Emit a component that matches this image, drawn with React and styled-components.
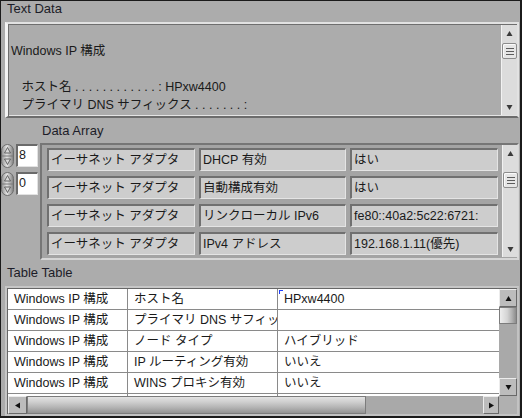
import React from "react";
import styled, { createGlobalStyle } from "styled-components";

const GlobalStyle = createGlobalStyle`
  html, body { margin: 0; padding: 0; background: #acacac; }
  body {
    font-family: "Liberation Sans", "Noto Sans CJK JP", sans-serif;
    font-size: 12.5px;
    color: #1a1a1a;
  }
`;

const Panel = styled.div`
  box-sizing: border-box;
  width: 522px;
  height: 418px;
  background: #acacac;
  border: 1px solid #1b1b1b;
  border-right-width: 2px;
  border-bottom-width: 2px;
  display: flex;
  flex-direction: column;
  overflow: hidden;
`;

const Caption = styled.div`
  box-sizing: border-box;
  height: ${(p) => p.$h}px;
  padding: ${(p) => p.$pt}px 0 0 ${(p) => p.$indent}px;
  font-size: 13px;
  line-height: 16px;
  color: #1c1c28;
`;

/* ---------- text data ---------- */

const TextBox = styled.div`
  box-sizing: border-box;
  width: 514px;
  height: 96px;
  margin-left: 4px;
  display: flex;
  border-style: solid;
  border-width: 2px 2px 2px 3px;
  border-color: #e2e2e2 #e2e2e2 #6c6c6c #f4f4f4;
  box-shadow: inset 1px 1px 0 #6e6e6e, inset -1px -1px 0 #e4e4e4;
`;

const TextContent = styled.div`
  flex: 1;
  overflow: hidden;
  white-space: pre;
  line-height: 18px;
  padding: 0 0 0 3px;
`;

const LightScroll = styled.div`
  box-sizing: border-box;
  width: 16px;
  margin: 1px 0;
  background: #dcdcdc;
  border-left: 1px solid #f2f2f2;
  display: flex;
  flex-direction: column;
  align-items: center;
`;

const ArrowZone = styled.div`
  height: 16px;
  width: 100%;
  display: flex;
  align-items: center;
  justify-content: center;
`;

const LightThumb = styled.div`
  box-sizing: border-box;
  width: 15px;
  height: 16px;
  margin-top: ${(p) => p.$offset}px;
  background: #e6e6e6;
  border: 1px solid #8c8c8c;
  border-radius: 2px;
  box-shadow: inset 1px 1px 0 #fafafa;
  display: flex;
  flex-direction: column;
  align-items: center;
  justify-content: center;
  gap: 2px;

  span {
    display: block;
    width: 8px;
    height: 1px;
    background: #5c5c5c;
  }
`;

const Spacer = styled.div`
  flex: 1;
`;

/* ---------- data array ---------- */

const ArrayRow = styled.div`
  height: 117px;
  display: flex;
  align-items: flex-start;
`;

const IndexColumn = styled.div`
  width: 39px;
  padding-top: 1px;
  display: flex;
  flex-direction: column;
  gap: 4px;
`;

const IndexControl = styled.div`
  display: flex;
  align-items: flex-start;
  gap: 2px;
`;

const NumericBox = styled.div`
  box-sizing: border-box;
  width: 22px;
  height: 23px;
  background: #fff;
  border-style: solid;
  border-width: 2px 1px 1px 2px;
  border-color: #6a6a6a #e2e2e2 #e2e2e2 #6a6a6a;
  padding-left: 1px;
  line-height: 19px;
`;

const ArrayFrame = styled.div`
  box-sizing: border-box;
  width: 479px;
  height: 117px;
  background: #a4a4a4;
  border-style: solid;
  border-width: 2px;
  border-color: #767676 #d6d6d6 #d6d6d6 #767676;
  display: flex;
`;

const CellGrid = styled.div`
  padding: 3px 0 0 5px;
  display: grid;
  grid-template-columns: 148px 147px 148px;
  grid-auto-rows: 23px;
  column-gap: 4px;
  row-gap: 5px;
`;

const ArrayCell = styled.div`
  box-sizing: border-box;
  background: #cdcdcd;
  border-style: solid;
  border-width: 2px 1px 1px 2px;
  border-color: #707070 #e4e4e4 #e4e4e4 #707070;
  padding-left: 2px;
  line-height: 20px;
  white-space: nowrap;
  overflow: hidden;
`;

const ArrayScroll = styled(LightScroll)`
  height: 112px;
  margin: 0 0 0 4px;
`;

/* ---------- table ---------- */

const TableFrame = styled.div`
  box-sizing: border-box;
  width: 514px;
  height: 130px;
  margin-left: 4px;
  border-style: solid;
  border-width: 2px;
  border-color: #c6c6c6 #c2c2c2 #c2c2c2 #c6c6c6;
`;

const TableInner = styled.div`
  height: 100%;
  box-sizing: border-box;
  border-top: 1px solid #666;
  border-left: 1px solid #666;
  display: grid;
  grid-template-columns: 491px 18px;
  grid-template-rows: 107px 18px;
`;

const DataArea = styled.div`
  background: #fff;
  overflow: hidden;
`;

const TableRow = styled.div`
  display: grid;
  grid-template-columns: 120px 150px 1fr;
  height: 21px;
  box-sizing: border-box;
  border-bottom: 1px solid #8a8a8a;
`;

const TableCell = styled.div`
  position: relative;
  padding-left: ${(p) => p.$pad}px;
  border-right: ${(p) => (p.$last ? "none" : "1px solid #8a8a8a")};
  line-height: 20px;
  white-space: nowrap;
  overflow: hidden;

  ${(p) =>
    p.$marked &&
    `&::before {
      content: "";
      position: absolute;
      left: 1px;
      top: 1px;
      width: 3px;
      height: 3px;
      border-top: 1px solid #1c3cff;
      border-left: 1px solid #1c3cff;
    }`}
`;

const VScroll = styled.div`
  display: flex;
  flex-direction: column;
  background: #a9a9a9;
`;

const HScroll = styled.div`
  display: flex;
  background: #a9a9a9;
`;

const ScrollButton = styled.div`
  box-sizing: border-box;
  flex: none;
  width: ${(p) => p.$w}px;
  height: ${(p) => p.$h}px;
  background: #bcbcbc;
  border: 1px solid;
  border-color: #ececec #686868 #686868 #ececec;
  display: flex;
  align-items: center;
  justify-content: center;
`;

const VThumb = styled.div`
  box-sizing: border-box;
  height: 17px;
  border: 1px solid #7c7c7c;
  background: linear-gradient(to right, #ededed 0%, #d4d4d4 45%, #b0b0b0 75%, #8c8c8c 100%);
`;

const HThumb = styled.div`
  box-sizing: border-box;
  width: 339px;
  border: 1px solid #7c7c7c;
  background: linear-gradient(to bottom, #e4e4e4 0%, #cccccc 35%, #b4b4b4 65%, #939393 100%);
`;

const Corner = styled.div`
  background: #b0b0b0;
`;

/* ---------- drawings ---------- */

const Tri = ({ dir, size = 7, fill = "#111", stroke }) => {
  const pts = {
    up: "0.5,6 3.5,1 6.5,6",
    down: "0.5,1 3.5,6 6.5,1",
    left: "6,0.5 1,3.5 6,6.5",
    right: "1,0.5 6,3.5 1,6.5",
  }[dir];
  return (
    <svg width={size} height={size} viewBox="0 0 7 7">
      <polygon points={pts} fill={fill} stroke={stroke || "none"} strokeWidth="0.8" />
    </svg>
  );
};

const Spinner = () => (
  <svg width="13" height="24" viewBox="0 0 13 24">
    <defs>
      <linearGradient id="spg" x1="0" y1="0" x2="1" y2="0">
        <stop offset="0" stopColor="#8e8e8e" />
        <stop offset="0.45" stopColor="#e4e4e4" />
        <stop offset="1" stopColor="#7e7e7e" />
      </linearGradient>
    </defs>
    <rect x="0.5" y="0.5" width="12" height="23" rx="6" fill="url(#spg)" stroke="#6e6e6e" />
    <line x1="1" y1="12" x2="12" y2="12" stroke="#7a7a7a" />
    <polygon points="3.5,9 6.5,3.5 9.5,9" fill="#d8d8d8" stroke="#4c4c4c" strokeWidth="0.8" />
    <polygon points="3.5,15 6.5,20.5 9.5,15" fill="#d8d8d8" stroke="#4c4c4c" strokeWidth="0.8" />
  </svg>
);

const LightScrollbar = ({ as: Comp = LightScroll, offset }) => (
  <Comp>
    <ArrowZone>
      <Tri dir="up" fill="#3a3a3a" />
    </ArrowZone>
    <LightThumb $offset={offset}>
      <span />
      <span />
      <span />
    </LightThumb>
    <Spacer />
    <ArrowZone>
      <Tri dir="down" fill="#3a3a3a" />
    </ArrowZone>
  </Comp>
);

/* ---------- data ---------- */

const textLines = [
  "",
  "Windows IP 構成",
  "",
  "   ホスト名 . . . . . . . . . . . . : HPxw4400",
  "   プライマリ DNS サフィックス . . . . . . . :",
];

const arrayRows = [
  ["イーサネット アダプタ", "DHCP 有効", "はい"],
  ["イーサネット アダプタ", "自動構成有効", "はい"],
  ["イーサネット アダプタ", "リンクローカル IPv6", "fe80::40a2:5c22:6721:"],
  ["イーサネット アダプタ", "IPv4 アドレス", "192.168.1.11(優先)"],
];

// last row only peeks out under the horizontal scrollbar
const tableRows = [
  ["Windows IP 構成", "ホスト名", "HPxw4400"],
  ["Windows IP 構成", "プライマリ DNS サフィックス", ""],
  ["Windows IP 構成", "ノード タイプ", "ハイブリッド"],
  ["Windows IP 構成", "IP ルーティング有効", "いいえ"],
  ["Windows IP 構成", "WINS プロキシ有効", "いいえ"],
  ["", "", ""],
];

export default function App() {
  return (
    <>
      <GlobalStyle />
      <Panel>
        <Caption $h={21} $pt={0} $indent={6}>Text Data</Caption>
        <TextBox>
          <TextContent>{textLines.join("\n")}</TextContent>
          <LightScrollbar offset={2} />
        </TextBox>

        <Caption $h={25} $pt={5} $indent={41}>Data Array</Caption>
        <ArrayRow>
          <IndexColumn>
            {["8", "0"].map((v) => (
              <IndexControl key={v}>
                <Spinner />
                <NumericBox>{v}</NumericBox>
              </IndexControl>
            ))}
          </IndexColumn>
          <ArrayFrame>
            <CellGrid>
              {arrayRows.flat().map((t, i) => (
                <ArrayCell key={i}>{t}</ArrayCell>
              ))}
            </CellGrid>
            <LightScrollbar as={ArrayScroll} offset={11} />
          </ArrayFrame>
        </ArrayRow>

        <Caption $h={26} $pt={5} $indent={6}>Table Table</Caption>
        <TableFrame>
          <TableInner>
            <DataArea>
              {tableRows.map((r, i) => (
                <TableRow key={i}>
                  <TableCell $pad={6}>{r[0]}</TableCell>
                  <TableCell $pad={6}>{r[1]}</TableCell>
                  <TableCell $pad={6} $last $marked={i === 0}>{r[2]}</TableCell>
                </TableRow>
              ))}
            </DataArea>
            <VScroll>
              <ScrollButton $w={18} $h={18}>
                <Tri dir="up" />
              </ScrollButton>
              <VThumb />
              <Spacer />
              <ScrollButton $w={18} $h={18}>
                <Tri dir="down" />
              </ScrollButton>
            </VScroll>
            <HScroll>
              <ScrollButton $w={19} $h={18}>
                <Tri dir="left" />
              </ScrollButton>
              <HThumb />
              <Spacer />
              <ScrollButton $w={16} $h={18}>
                <Tri dir="right" />
              </ScrollButton>
            </HScroll>
            <Corner />
          </TableInner>
        </TableFrame>
      </Panel>
    </>
  );
}
